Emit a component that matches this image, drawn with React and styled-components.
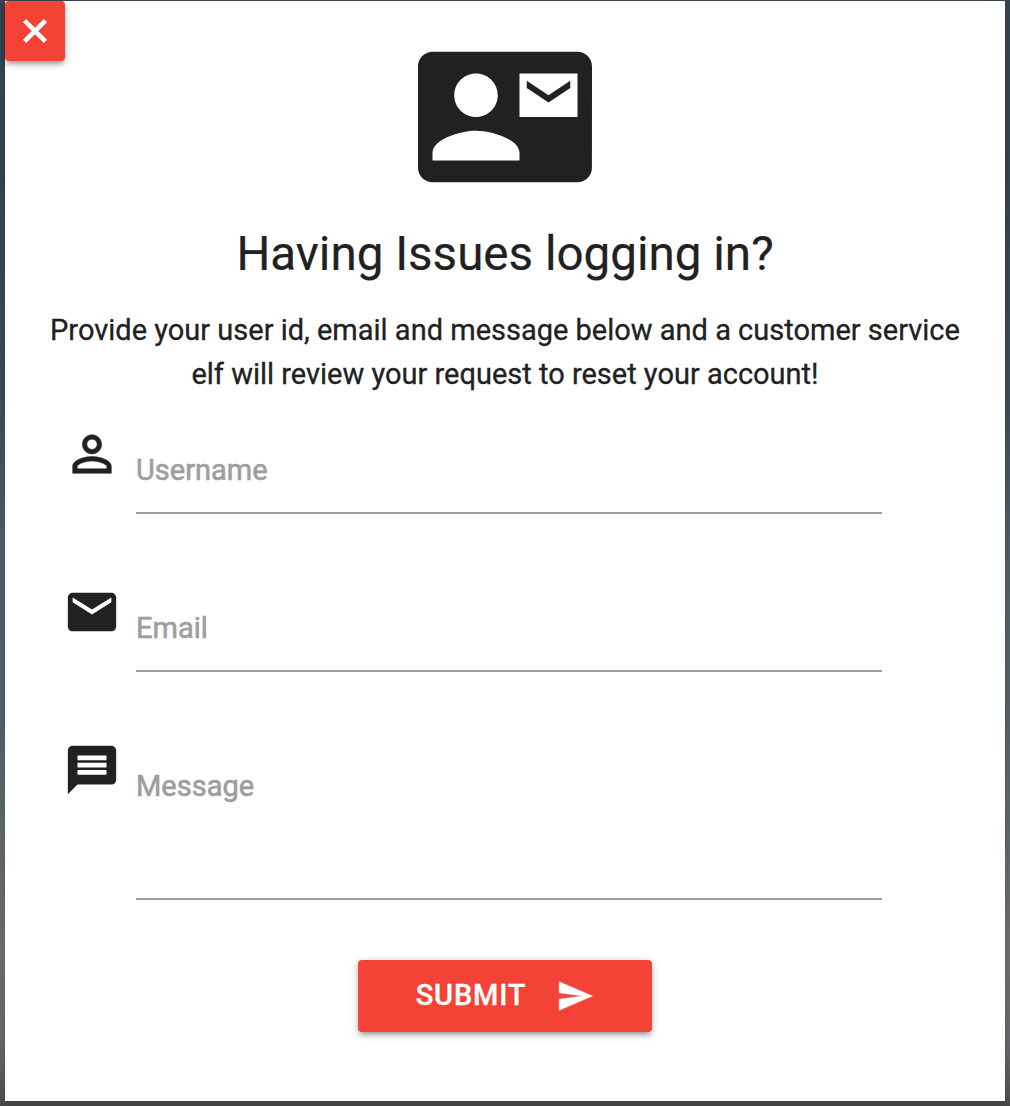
import React from "react";
import styled, { createGlobalStyle } from "styled-components";

const GlobalStyle = createGlobalStyle`
  *, *::before, *::after { box-sizing: border-box; }
  body {
    margin: 0;
    background: #414141;
    color: #212121;
    font-family: Roboto, "Liberation Sans", sans-serif;
    font-size: 29px;
    line-height: 1.5;
  }
`;

const Backdrop = styled.div`
  height: 1106px;
  padding: 1px 5px 5px;
  overflow: hidden;
  background: linear-gradient(
    180deg,
    #364451 0,
    #334350 180px,
    #3b4a56 400px,
    #4f5b64 540px,
    #545f66 720px,
    #606668 850px,
    #6c6b6b 950px,
    #66676a 1040px,
    #4f5051 1098px,
    #454545 1106px
  );
`;

const Modal = styled.form`
  display: flex;
  flex-direction: column;
  align-items: center;
  position: relative;
  height: 1100px;
  padding-top: 29px;
  background: #fff;
  box-shadow: 0 3px 5px rgba(0, 0, 0, 0.12);
`;

const Button = styled.button`
  display: flex;
  align-items: center;
  justify-content: center;
  padding: 0;
  border: 0;
  border-radius: 4px;
  background: #f44336;
  color: #fff;
  font: inherit;
  cursor: pointer;
  box-shadow: 0 4px 4px rgba(0, 0, 0, 0.14), 0 6px 2px -4px rgba(0, 0, 0, 0.12),
    0 2px 10px rgba(0, 0, 0, 0.2);
`;

const CloseButton = styled(Button)`
  position: absolute;
  top: 0;
  left: 0;
  width: 60px;
  height: 60px;
`;

const SubmitButton = styled(Button)`
  gap: 30px;
  width: 294px;
  height: 72px;
  margin-top: 60px;
  text-transform: uppercase;
`;

const SubmitText = styled.span`
  padding-bottom: 2px;
  font-weight: 500;
  font-size: 29px;
  letter-spacing: 0.8px;
  line-height: 70px;
  -webkit-text-stroke: 0.3px;
`;

const Svg = styled.svg`
  display: block;
  flex: none;
  width: ${(p) => p.$size}px;
  height: ${(p) => p.$size}px;
  fill: currentColor;
  stroke: currentColor;
  stroke-width: ${(p) => p.$stroke || 0};
`;

const Title = styled.h5`
  margin: 24px 0 0;
  font-size: 47.56px;
  font-weight: 400;
  line-height: 52px;
  -webkit-text-stroke: 0.2px;
`;

const Description = styled.p`
  width: 920px;
  margin: 28px 0 0;
  line-height: 44px;
  text-align: center;
  -webkit-text-stroke: 0.3px;
`;

const Fields = styled.div`
  display: flex;
  flex-direction: column;
  gap: 69px;
  width: 884px;
  margin-top: 29px;
`;

const Field = styled.label`
  display: flex;
  gap: 15px;
  height: ${(p) => p.$height}px;
`;

const Control = styled.span`
  display: block;
  width: 746px;
  padding-top: 24px;
  border-bottom: 2px solid #9e9e9e;
  color: #9e9e9e;
  -webkit-text-stroke: 0.6px;
`;

const paths = {
  close:
    "M19 6.41L17.59 5 12 10.59 6.41 5 5 6.41 10.59 12 5 17.59 6.41 19 12 13.41 17.59 19 19 17.59 13.41 12z",
  contact:
    "M21 8V7l-3 2-3-2v1l3 2 3-2zm1-5H2C.9 3 0 3.9 0 5v14c0 1.1.9 2 2 2h20c1.1 0 1.99-.9 1.99-2L24 5c0-1.1-.9-2-2-2zM8 6c1.66 0 3 1.34 3 3s-1.34 3-3 3-3-1.34-3-3 1.34-3 3-3zm6 12H2v-1c0-2 4-3.1 6-3.1s6 1.1 6 3.1v1zm8-6h-8V6h8v6z",
  person:
    "M12 5.9c1.16 0 2.1.94 2.1 2.1s-.94 2.1-2.1 2.1S9.9 9.16 9.9 8s.94-2.1 2.1-2.1m0 9c2.97 0 6.1 1.46 6.1 2.1v1.1H5.9V17c0-.64 3.13-2.1 6.1-2.1M12 4C9.79 4 8 5.79 8 8s1.79 4 4 4 4-1.79 4-4-1.79-4-4-4zm0 9c-2.67 0-8 1.34-8 4v3h16v-3c0-2.66-5.33-4-8-4z",
  email:
    "M20 4H4c-1.1 0-1.99.9-1.99 2L2 18c0 1.1.9 2 2 2h16c1.1 0 2-.9 2-2V6c0-1.1-.9-2-2-2zm0 4l-8 5-8-5V6l8 5 8-5v2z",
  message:
    "M20 2H4c-1.1 0-1.99.9-1.99 2L2 22l4-4h14c1.1 0 2-.9 2-2V4c0-1.1-.9-2-2-2zm-2 12H6v-2h12v2zm0-3H6V9h12v2zm0-3H6V6h12v2z",
  send: "M2.01 21L23 12 2.01 3 2 10l15 2-15 2z",
};

const Icon = ({ name, size, stroke }) => (
  <Svg viewBox="0 0 24 24" $size={size} $stroke={stroke} aria-hidden="true">
    <path d={paths[name]} />
  </Svg>
);

const fields = [
  { icon: "person", label: "Username", height: 89, stroke: 0.2 },
  { icon: "email", label: "Email", height: 89 },
  { icon: "message", label: "Message", height: 159 },
];

export default function App() {
  return (
    <>
      <GlobalStyle />
      <Backdrop>
        <Modal onSubmit={(e) => e.preventDefault()}>
          <CloseButton type="button" aria-label="Close">
            <Icon name="close" size={38} stroke={0.9} />
          </CloseButton>
          <Icon name="contact" size={174} />
          <Title>Having Issues logging in?</Title>
          <Description>
            Provide your user id, email and message below and a customer service
            elf will review your request to reset your account!
          </Description>
          <Fields>
            {fields.map((f) => (
              <Field key={f.label} $height={f.height}>
                <Icon name={f.icon} size={58} stroke={f.stroke} />
                <Control>{f.label}</Control>
              </Field>
            ))}
          </Fields>
          <SubmitButton type="submit">
            <SubmitText>Submit</SubmitText>
            <Icon name="send" size={38} stroke={0.3} />
          </SubmitButton>
        </Modal>
      </Backdrop>
    </>
  );
}
